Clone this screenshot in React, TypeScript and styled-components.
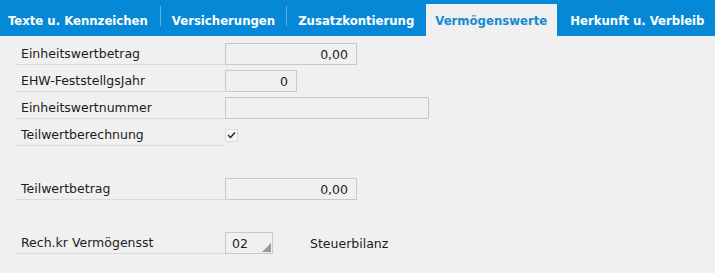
import styled, { createGlobalStyle } from "styled-components";

const GlobalStyle = createGlobalStyle`
  html, body {
    margin: 0;
    padding: 0;
    background: #f0f0f0;
  }
  body {
    font-family: "DejaVu Sans", Verdana, sans-serif;
    color: #1b1b1b;
  }
`;

const Page = styled.div`
  width: 715px;
  height: 273px;
  background: #f0f0f0;
  overflow: hidden;
`;

const TabBar = styled.div`
  display: flex;
  align-items: flex-end;
  height: 36px;
  background: #0589d6;
`;

const Tab = styled.div<{ $active?: boolean; $divider?: boolean; $first?: boolean }>`
  position: relative;
  display: flex;
  align-items: center;
  height: 32px;
  padding: ${(p) =>
    p.$active ? "0 10px 0 9px" : p.$first ? "0 12px 0 8px" : "0 11px"};
  margin-right: ${(p) => (p.$active ? "2px" : "1px")};
  font-family: "DejaVu Sans Condensed", "DejaVu Sans", sans-serif;
  font-stretch: condensed;
  font-size: 13px;
  font-weight: bold;
  color: ${(p) => (p.$active ? "#1788d2" : "#ffffff")};
  background: ${(p) => (p.$active ? "#f0f0f0" : "transparent")};
  white-space: nowrap;

  ${(p) =>
    p.$divider &&
    `
    &::after {
      content: "";
      position: absolute;
      right: -1px;
      top: 2px;
      height: 20px;
      width: 1px;
      background: rgba(255, 255, 255, 0.35);
    }
  `}
`;

const Form = styled.div`
  display: flex;
  flex-direction: column;
  gap: 5px;
  padding: 7px 0 0 16px;
`;

const Row = styled.div`
  display: flex;
  align-items: center;
  height: 22px;
`;

const Label = styled.div`
  width: 204px;
  height: 22px;
  padding-left: 5px;
  display: flex;
  align-items: center;
  font-size: 12.5px;
  border-bottom: 1px solid #dcdcdc;
  box-sizing: content-box;
  margin-top: -1px;
`;

const Field = styled.div<{ $width: number; $align?: "left" | "right" }>`
  position: relative;
  width: ${(p) => p.$width}px;
  height: 22px;
  box-sizing: border-box;
  border: 1px solid #c9c9c9;
  background: #f0f0f0;
  font-size: 12.5px;
  display: flex;
  align-items: center;
  justify-content: ${(p) => (p.$align === "left" ? "flex-start" : "flex-end")};
  padding: ${(p) => (p.$align === "left" ? "0 0 0 6px" : "0 8px 0 0")};
`;

const Corner = styled.span`
  position: absolute;
  right: 1px;
  bottom: 1px;
  width: 0;
  height: 0;
  border-left: 9px solid transparent;
  border-bottom: 9px solid #9a9a9a;
`;

const CheckBox = styled.div`
  width: 13px;
  height: 13px;
  box-sizing: border-box;
  border: 1px solid #dcdcdc;
  background: #f7f7f7;
  display: flex;
  align-items: center;
  justify-content: center;
`;

const Spacer = styled.div`
  height: 22px;
`;

const Note = styled.span`
  margin-left: 37px;
  font-size: 12.5px;
`;

const tabs = [
  { label: "Texte u. Kennzeichen", divider: true, first: true },
  { label: "Versicherungen", divider: true },
  { label: "Zusatzkontierung" },
  { label: "Vermögenswerte", active: true },
  { label: "Herkunft u. Verbleib", divider: true },
];

export default function App() {
  return (
    <Page>
      <GlobalStyle />
      <TabBar>
        {tabs.map((t) => (
          <Tab key={t.label} $active={t.active} $divider={t.divider} $first={t.first}>
            {t.label}
          </Tab>
        ))}
      </TabBar>
      <Form>
        <Row>
          <Label>Einheitswertbetrag</Label>
          <Field $width={132}>0,00</Field>
        </Row>
        <Row>
          <Label>EHW-FeststellgsJahr</Label>
          <Field $width={72}>0</Field>
        </Row>
        <Row>
          <Label>Einheitswertnummer</Label>
          <Field $width={204} />
        </Row>
        <Row>
          <Label>Teilwertberechnung</Label>
          <CheckBox>
            <svg width="9" height="8" viewBox="0 0 9 8">
              <path d="M1 4 L3.5 6.5 L8 1.5" fill="none" stroke="#222" strokeWidth="1.4" />
            </svg>
          </CheckBox>
        </Row>
        <Spacer />
        <Row>
          <Label>Teilwertbetrag</Label>
          <Field $width={132}>0,00</Field>
        </Row>
        <Spacer />
        <Row>
          <Label>Rech.kr Vermögensst</Label>
          <Field $width={48} $align="left">
            02
            <Corner />
          </Field>
          <Note>Steuerbilanz</Note>
        </Row>
      </Form>
    </Page>
  );
}
